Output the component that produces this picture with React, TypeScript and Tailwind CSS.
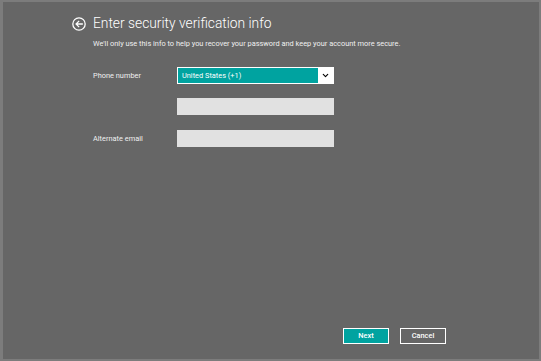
import { ChevronDown } from "lucide-react";

function BackIcon() {
  return (
    <svg width="14" height="14" viewBox="0 0 24 24" fill="none" stroke="white" strokeWidth="2.2">
      <circle cx="12" cy="12" r="10.6" />
      <path d="M17.5 12H7.5M11.5 7.5L7 12l4.5 4.5" strokeLinecap="square" />
    </svg>
  );
}

export default function App() {
  return (
    <div className="w-[541px] h-[361px] bg-[#7c7c7c] pl-[3px] pt-[2px] pr-[2px] pb-[2px] font-['Roboto',sans-serif]">
      <div className="w-full h-full bg-[#666666] flex flex-col pl-[90px] text-white">
        <div className="flex items-center gap-[7px] -ml-[21px] mt-[12px] h-[20px]">
          <BackIcon />
          <h1 className="text-[13.8px] font-light leading-none">Enter security verification info</h1>
        </div>
        <div className="mt-[5px] text-[7.4px] leading-[9px] text-[#f0f0f0]">
          We'll only use this info to help you recover your password and keep your account more secure.
        </div>

        <div className="mt-[19px] flex flex-col">
          <div className="flex items-center h-[17px]">
            <span className="w-[84px] text-[7.4px] text-[#f0f0f0]">Phone number</span>
            <div className="w-[157px] h-[17px] bg-white flex p-[1px]">
              <div className="flex-1 bg-[#00a3a0] flex items-center pl-[4px] text-[7.4px]">United States (+1)</div>
              <div className="w-[15px] flex items-center justify-center text-black">
                <ChevronDown size={9} strokeWidth={3} />
              </div>
            </div>
          </div>
          <div className="flex items-center h-[17px] mt-[14px]">
            <span className="w-[84px]" />
            <div className="w-[157px] h-[17px] bg-[#e1e1e1]" />
          </div>
          <div className="flex items-center h-[17px] mt-[15px]">
            <span className="w-[84px] text-[7.4px] text-[#f0f0f0]">Alternate email</span>
            <div className="w-[157px] h-[17px] bg-[#e1e1e1]" />
          </div>
        </div>

        <div className="mt-auto mb-[15px] ml-[250px] flex gap-[11px]">
          <button className="w-[46px] h-[16px] bg-[#00a3a0] border border-white text-[7.4px] font-medium leading-none">Next</button>
          <button className="w-[46px] h-[16px] border border-white text-[7.4px] font-medium leading-none">Cancel</button>
        </div>
      </div>
    </div>
  );
}
